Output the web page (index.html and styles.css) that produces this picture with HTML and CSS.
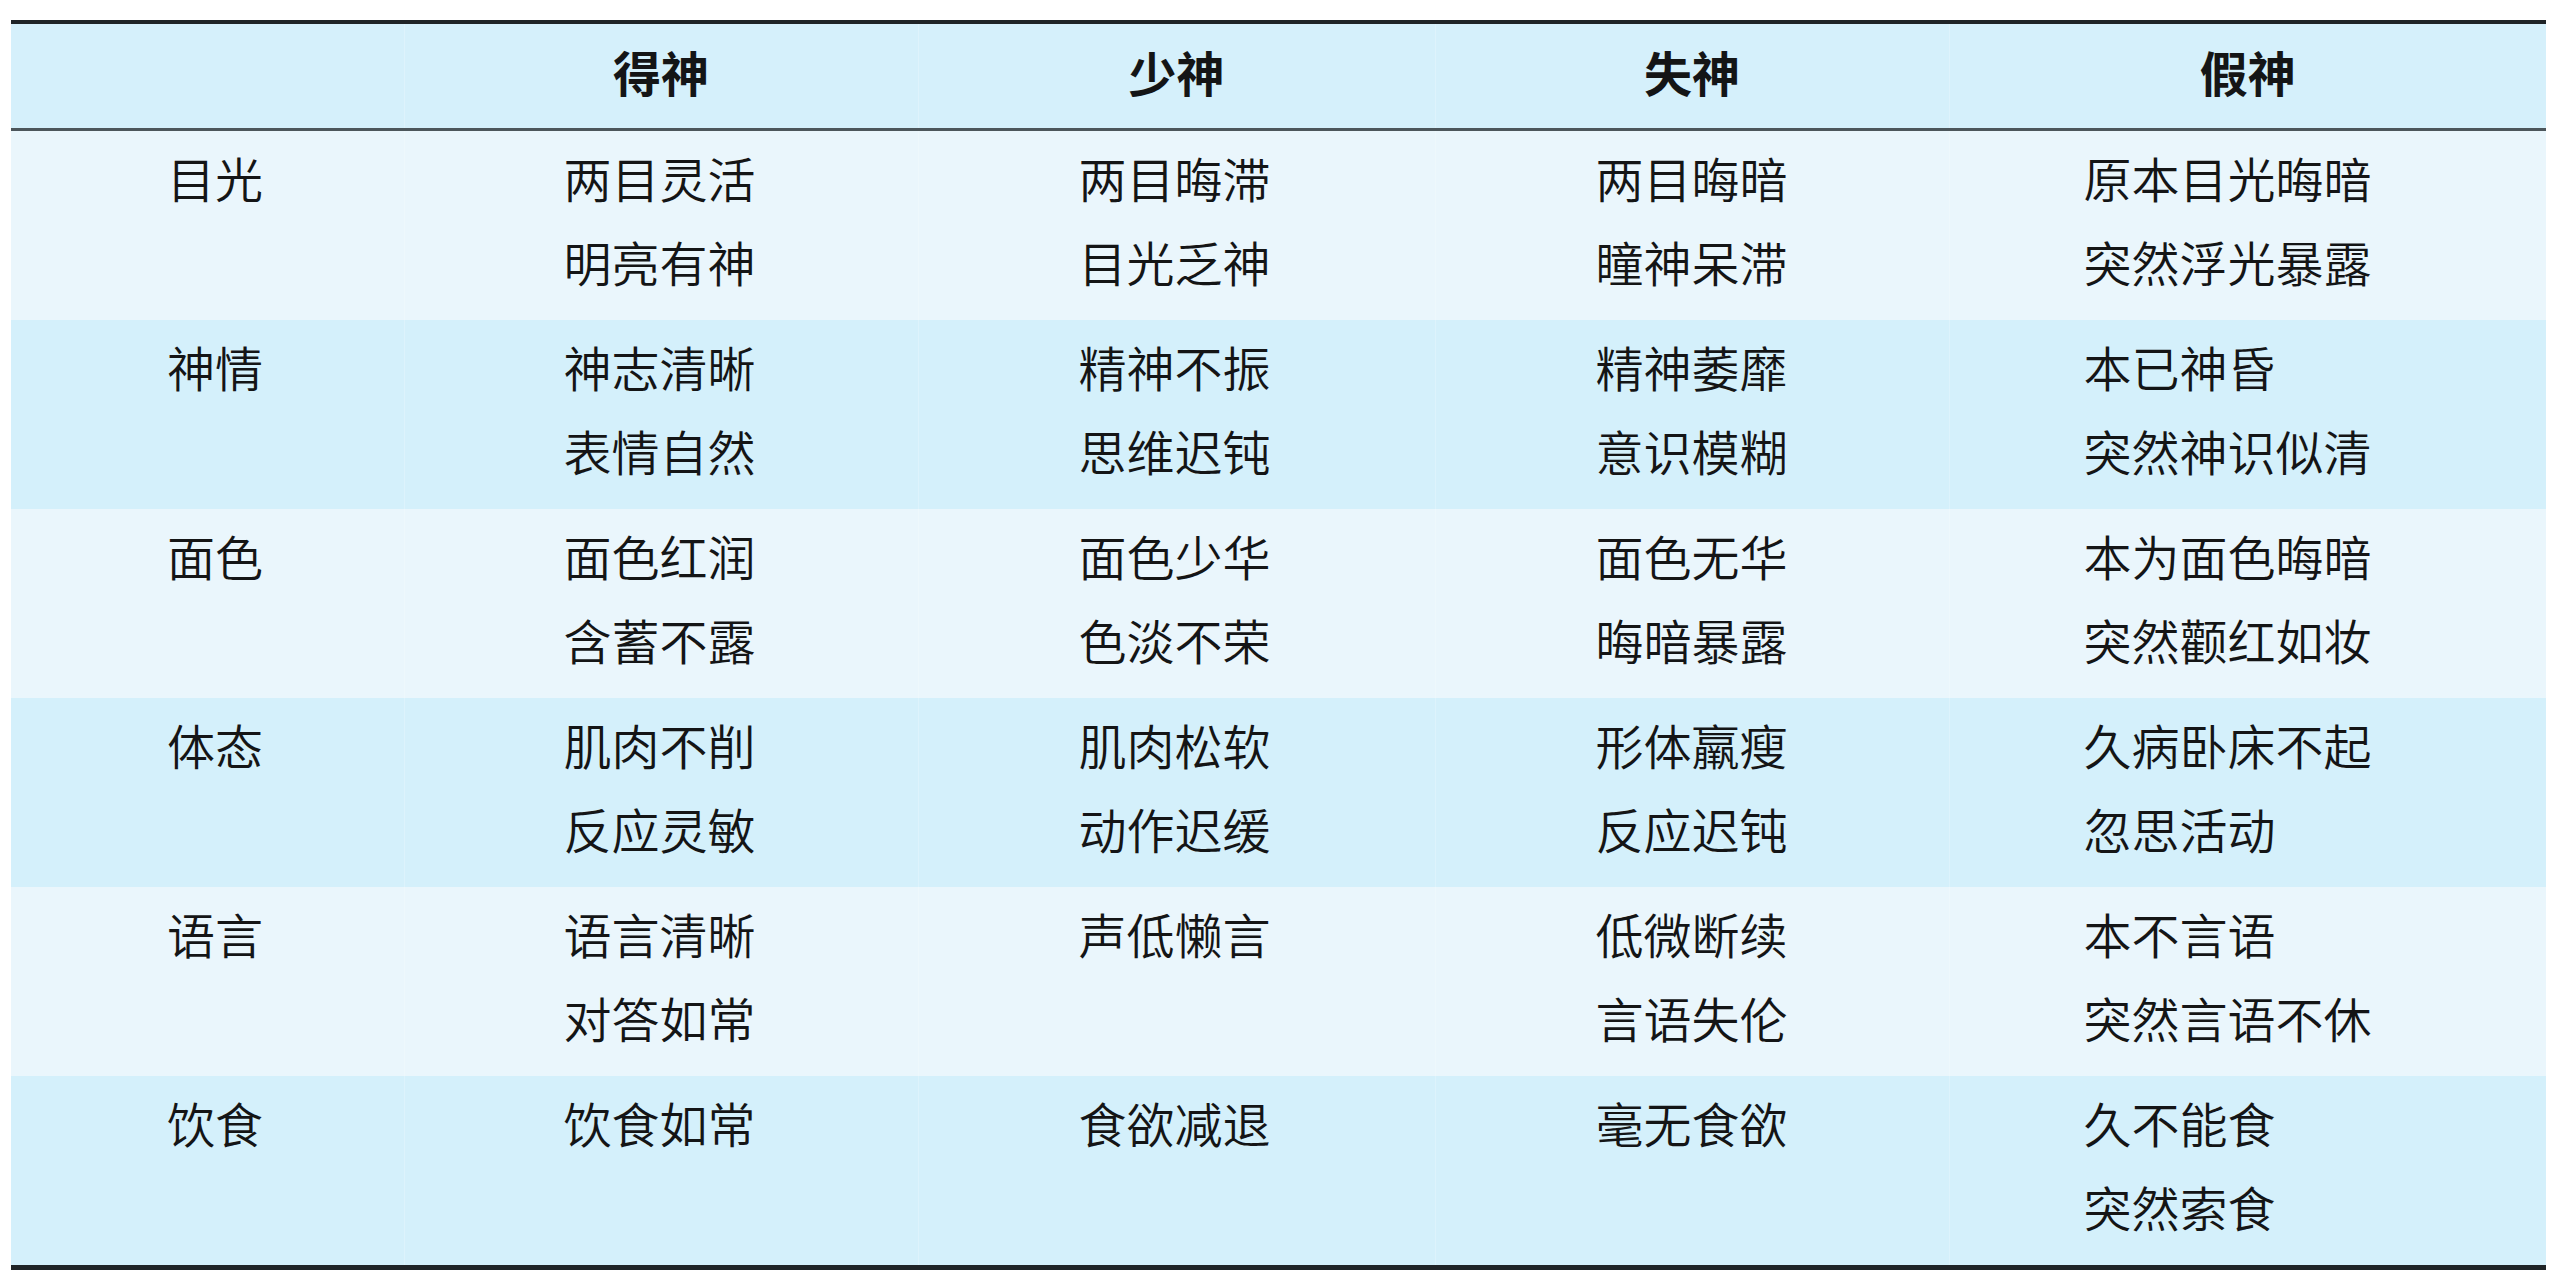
FILE: index.html
```html
<!DOCTYPE html>
<html lang="zh-CN">
<head>
<meta charset="utf-8">
<title>得神 少神 失神 假神</title>
<link rel="stylesheet" href="styles.css">
</head>
<body>
<table class="shen">
  <colgroup>
    <col class="c1"><col class="c2"><col class="c3"><col class="c4"><col class="c5">
  </colgroup>
  <thead>
    <tr>
      <th></th><th>得神</th><th>少神</th><th>失神</th><th>假神</th>
    </tr>
  </thead>
  <tbody>
    <tr class="light">
      <td>目光</td>
      <td>两目灵活<br>明亮有神</td>
      <td>两目晦滞<br>目光乏神</td>
      <td>两目晦暗<br>瞳神呆滞</td>
      <td>原本目光晦暗<br>突然浮光暴露</td>
    </tr>
    <tr class="dark">
      <td>神情</td>
      <td>神志清晰<br>表情自然</td>
      <td>精神不振<br>思维迟钝</td>
      <td>精神萎靡<br>意识模糊</td>
      <td>本已神昏<br>突然神识似清</td>
    </tr>
    <tr class="light">
      <td>面色</td>
      <td>面色红润<br>含蓄不露</td>
      <td>面色少华<br>色淡不荣</td>
      <td>面色无华<br>晦暗暴露</td>
      <td>本为面色晦暗<br>突然颧红如妆</td>
    </tr>
    <tr class="dark">
      <td>体态</td>
      <td>肌肉不削<br>反应灵敏</td>
      <td>肌肉松软<br>动作迟缓</td>
      <td>形体羸瘦<br>反应迟钝</td>
      <td>久病卧床不起<br>忽思活动</td>
    </tr>
    <tr class="light">
      <td>语言</td>
      <td>语言清晰<br>对答如常</td>
      <td>声低懒言</td>
      <td>低微断续<br>言语失伦</td>
      <td>本不言语<br>突然言语不休</td>
    </tr>
    <tr class="dark">
      <td>饮食</td>
      <td>饮食如常</td>
      <td>食欲减退</td>
      <td>毫无食欲</td>
      <td>久不能食<br>突然索食</td>
    </tr>
  </tbody>
</table>
</body>
</html>
```

FILE: styles.css
```css
html, body {
  margin: 0;
  padding: 0;
  background: #ffffff;
}

body {
  padding: 20px 0 0 11px;
  font-family: "Noto Sans CJK SC", "Noto Sans", sans-serif;
  color: #141516;
}

.shen {
  width: 2535px;
  table-layout: fixed;
  border-collapse: collapse;
  border-spacing: 0;
  border-top: 4px solid #1f2427;
  border-bottom: 5px solid #1f2427;
}

.c1 { width: 393px; }
.c2 { width: 514px; }
.c3 { width: 517px; }
.c4 { width: 514px; }
.c5 { width: 597px; }

.shen th {
  background: #d5f0fb;
  font-size: 48px;
  line-height: 84px;
  font-weight: 700;
  text-align: center;
  padding: 5px 0 15px 0;
  border-bottom: 3px solid #4c565b;
}

.shen td {
  font-size: 48px;
  line-height: 84px;
  font-weight: 350;
  text-align: left;
  vertical-align: top;
  padding: 4px 0 17px 0;
  white-space: nowrap;
}

.shen th + th,
.shen td + td {
  border-left: 1px solid rgba(255, 255, 255, 0.22);
}

.shen td:nth-child(1) { padding-left: 156px; }
.shen td:nth-child(2) { padding-left: 159px; }
.shen td:nth-child(3) { padding-left: 160px; }
.shen td:nth-child(4) { padding-left: 160px; }
.shen td:nth-child(5) { padding-left: 134px; }

.light td { background: #eaf6fc; }
.dark td { background: #d4f0fb; }
```
